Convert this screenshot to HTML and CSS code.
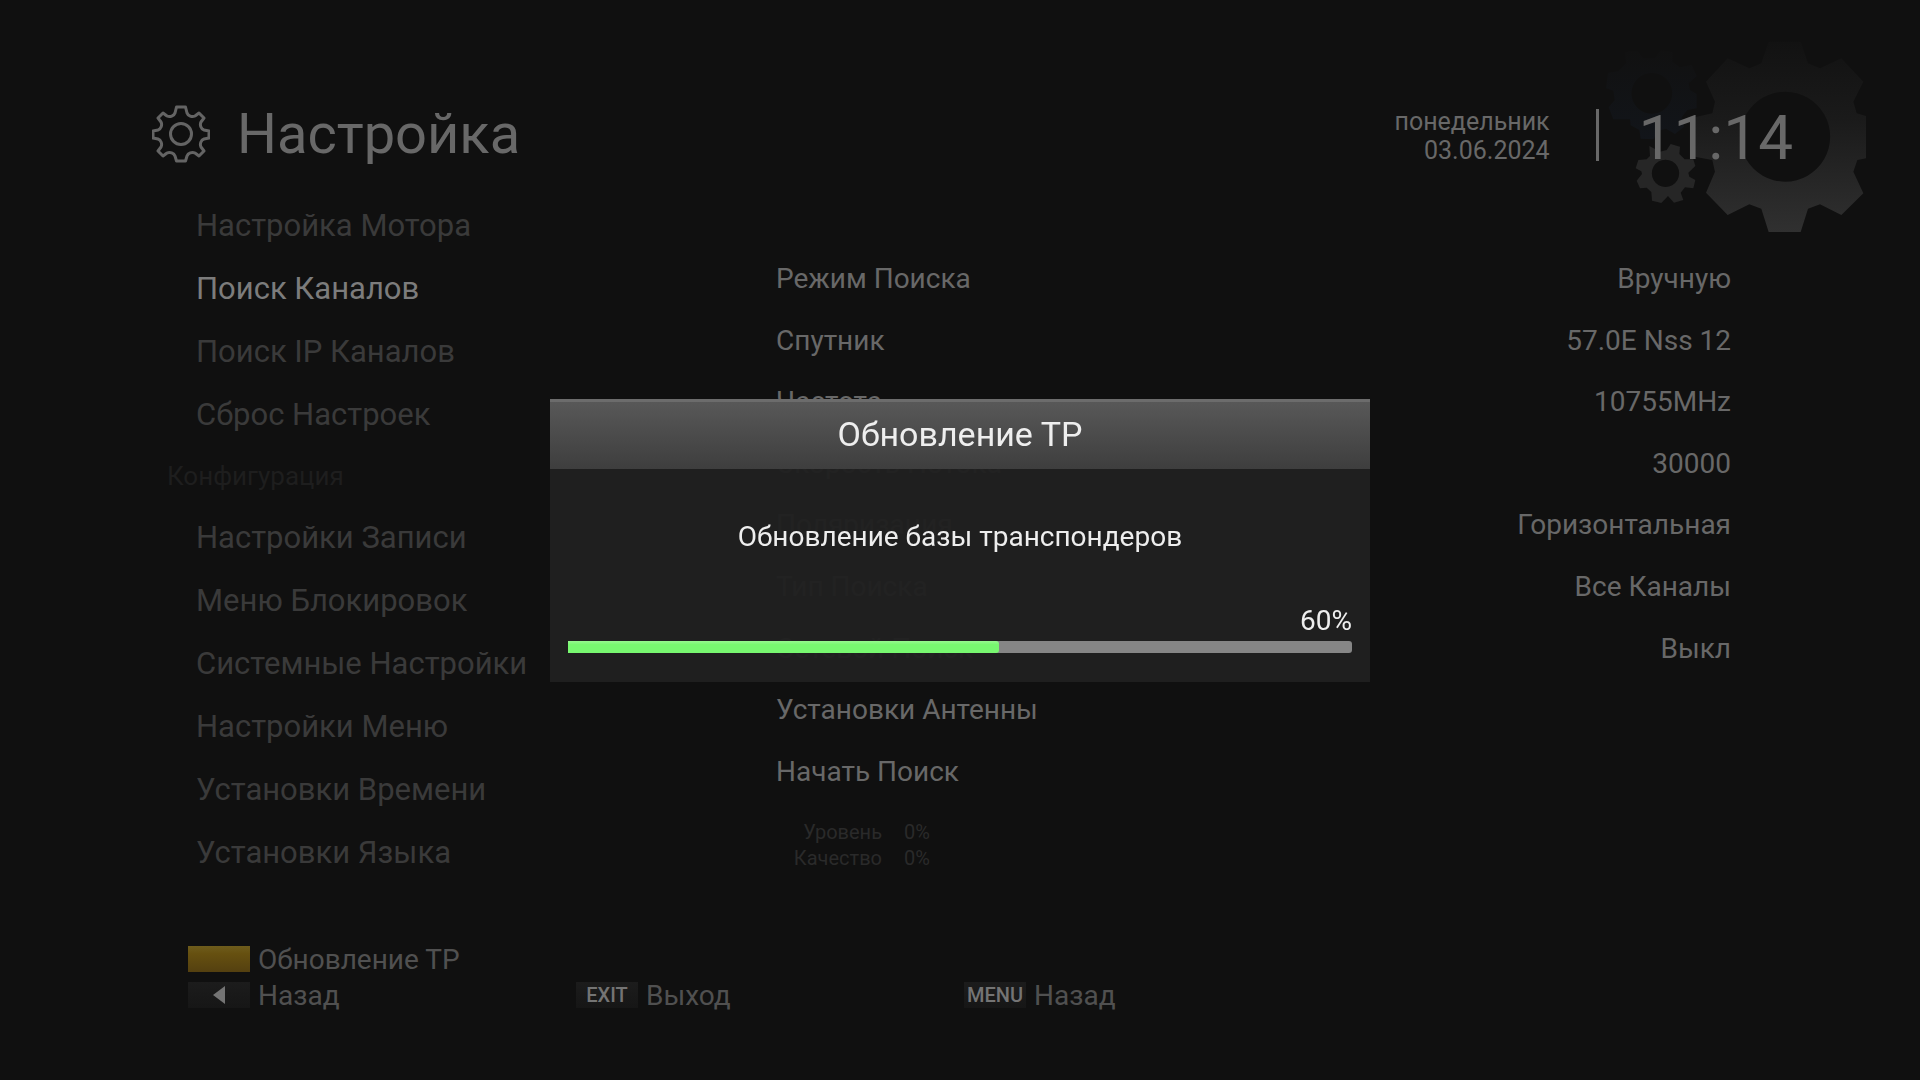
FILE: index.html
```html
<!DOCTYPE html>
<html lang="ru">
<head>
  <meta charset="UTF-8">
  <title>Настройка</title>
  <link rel="stylesheet" href="styles.css">
</head>
<body>

  <svg class="gears" viewBox="0 0 840 660" aria-hidden="true">
    <defs>
      <linearGradient id="bigFill" x1="0" y1="0" x2="0" y2="1">
        <stop offset="0" stop-color="#121212"/>
        <stop offset="0.4" stop-color="#1a1a1a"/>
        <stop offset="1" stop-color="#303030"/>
      </linearGradient>
      <linearGradient id="blueFill" x1="0" y1="0" x2="0" y2="1">
        <stop offset="0" stop-color="#111111"/>
        <stop offset="1" stop-color="#12151a"/>
      </linearGradient>
    </defs>
    <path fill="url(#blueFill)" fill-rule="evenodd" d="M75 65L112 62L130 85H165L182 60L218 66L217 95L240 112L275 104L290 138L266 160L270 180L290 192V235L262 240L245 262L252 290L225 312L198 296L175 302L160 328L122 326L118 300L92 286L90 268L40 268L26 232L44 210L40 182L18 175L24 128L54 124L78 100ZM155 129a61 61 0 1 0 1 0z"/>
    <path fill="#262626" fill-rule="evenodd" d="M148 348L180 365L200 360L212 342L240 350L238 372L254 388L280 388L286 408L265 428L268 440L286 450L280 475L255 472L242 488L250 510L222 518L204 498L184 519L156 512L154 486L140 473L120 475L110 452L126 432L124 424L107 415L115 390L140 388L150 378ZM196 389a41 41 0 1 0 1 0z"/>
    <path fill="url(#bigFill)" fill-rule="evenodd" d="M506 35H602L624 100L660 115L724 85L790 155L760 215L770 250L798 258V385L772 390L760 425L790 490L724 555L660 523L624 536L602 606H506L484 536L448 523L383 555L318 488L345 425L337 390L284 380V262L337 250L345 215L318 155L383 85L448 115L484 100ZM555 185a135 135 0 1 0 1 0z"/>
  </svg>

  <div class="screen">
    <header class="header">
      <svg class="header-icon" viewBox="0 0 58 58" aria-hidden="true">
        <path d="M24.500 2h9l1.500 6c1 3 5 4.500 8 3l4-3 5 5-3 4c-1.500 3 0 7 3 8l5 1v7l-5 1c-3 1-4.500 5-3 8l3 4-5 5-4-3c-3-1.500-7 0-8 3l-1.500 5h-9L23 51c-1-3-5-4.500-8-3l-4 3-5-5 3-4c1.500-3 0-7-3-8l-5-1v-7l5-1c3-1 4.500-5 3-8l-3-4 5-5 4 3c3 1.500 7 0 8-3z"/>
        <circle cx="29" cy="29" r="10.500"/>
      </svg>
      <h1>Настройка</h1>
      <div class="date">понедельник<br>03.06.2024</div>
      <div class="clock">11:14</div>
    </header>

    <main class="main">
      <nav class="menu">
        <a href="#">Настройка Мотора</a>
        <a href="#" class="active">Поиск Каналов</a>
        <a href="#">Поиск IP Каналов</a>
        <a href="#">Сброс Настроек</a>
        <h2>Конфигурация</h2>
        <a href="#">Настройки Записи</a>
        <a href="#">Меню Блокировок</a>
        <a href="#">Системные Настройки</a>
        <a href="#">Настройки Меню</a>
        <a href="#">Установки Времени</a>
        <a href="#">Установки Языка</a>
      </nav>

      <section class="settings">
        <dl class="options">
          <div><dt>Режим Поиска</dt><dd>Вручную</dd></div>
          <div><dt>Спутник</dt><dd>57.0E Nss 12</dd></div>
          <div><dt>Частота</dt><dd>10755MHz</dd></div>
          <div><dt>Скорость Потока</dt><dd>30000</dd></div>
          <div><dt>Поляризация</dt><dd>Горизонтальная</dd></div>
          <div><dt>Тип Поиска</dt><dd>Все Каналы</dd></div>
          <div><dt>Сетевой Поиск</dt><dd>Выкл</dd></div>
          <div><dt>Установки Антенны</dt></div>
          <div><dt>Начать Поиск</dt></div>
        </dl>
        <dl class="signal">
          <dt>Уровень</dt><dd>0%</dd>
          <dt>Качество</dt><dd>0%</dd>
        </dl>
      </section>
    </main>

    <footer class="keys">
      <button class="key key-wide"><span class="cap cap-yellow"></span>Обновление ТР</button>
      <button class="key"><span class="cap"><svg class="arrow" viewBox="0 0 12 18"><path d="M12 0v18L0 9z"/></svg></span>Назад</button>
      <button class="key"><span class="cap">EXIT</span>Выход</button>
      <button class="key"><span class="cap">MENU</span>Назад</button>
    </footer>
  </div>

  <div class="overlay">
    <div class="dialog" role="dialog" aria-labelledby="dialogTitle">
      <h2 class="dialog-title" id="dialogTitle">Обновление ТР</h2>
      <div class="dialog-body">
        <p>Обновление базы транспондеров</p>
        <label for="progress">60%</label>
        <progress id="progress" max="100" value="55"></progress>
      </div>
    </div>
  </div>

</body>
</html>
```

FILE: styles.css
```css
* {
  box-sizing: border-box;
  margin: 0;
  padding: 0;
}
body {
  font-family: Roboto, "Noto Sans", sans-serif;
  background: #101010;
  color: #686868;
  min-height: 100vh;
}
a {
  color: inherit;
  text-decoration: none;
}
.gears {
  position: absolute;
  top: 30px;
  right: 40px;
  width: 280px;
}
.screen {
  position: relative;
  padding: 94px 127px 0 152px;
}

/* header */
.header {
  display: flex;
  align-items: center;
  height: 80px;
}
.header-icon {
  width: 58px;
  margin-right: 27px;
  fill: none;
  stroke: #646464;
  stroke-width: 3;
  stroke-linejoin: round;
}
.header h1 {
  font-size: 56px;
  font-weight: 400;
}
.date {
  margin-top: 4px;
  margin-left: auto;
  padding-right: 46px;
  font-size: 25px;
  line-height: 29px;
  text-align: right;
}
.clock {
  margin-top: 2px;
  padding: 6px 0 0 40px;
  border-left: 3px solid #686868;
  font-size: 62px;
  line-height: 46px;
}

/* main */
.main {
  display: grid;
  grid-template-columns: 624px 1fr;
  padding-right: 62px;
}
.menu {
  padding: 20px 0 0 44px;
  font-size: 31px;
  line-height: 63px;
  color: #3a3a3a;
}
.menu a {
  display: block;
}
.menu .active {
  color: #7c7c7c;
}
.menu h2 {
  margin-left: -29px;
  font-size: 26px;
  font-weight: 400;
  line-height: 60px;
  color: #1e1e1e;
}
.options {
  display: grid;
  grid-auto-rows: 1fr;
  height: 554px;
  margin-top: 74px;
  font-size: 28px;
}
.options div {
  display: flex;
  justify-content: space-between;
  align-items: center;
}
.signal {
  display: grid;
  grid-template-columns: 106px 1fr;
  column-gap: 22px;
  padding-top: 17px;
  font-size: 20px;
  line-height: 26px;
  color: #2a2a2a;
}
.signal dt {
  text-align: right;
}

/* remote keys */
.keys {
  display: grid;
  grid-template-columns: 388px 388px 388px;
  padding: 57px 0 0 36px;
}
.key {
  display: flex;
  align-items: center;
  height: 36px;
  border: 0;
  background: none;
  font: inherit;
  font-size: 28px;
  color: #505050;
}
.key-wide {
  grid-column: 1 / -1;
}
.cap {
  display: flex;
  align-items: center;
  justify-content: center;
  width: 62px;
  height: 26px;
  margin-right: 8px;
  background: linear-gradient(#1c1c1c, #161616);
  font-size: 20px;
  font-weight: 500;
  color: #747474;
}
.cap-yellow {
  background: linear-gradient(#6e5c1c, #665010 30%, #544010);
}
.arrow {
  width: 12px;
  fill: #747474;
}

/* dialog */
.overlay {
  position: fixed;
  inset: 0;
  display: flex;
  align-items: center;
  justify-content: center;
}
.dialog {
  width: 820px;
  color: #eee;
}
.dialog-title {
  height: 70px;
  border-top: 3px solid #6c6c6c;
  background: linear-gradient(#585858, #3e3e3e);
  font-size: 34px;
  font-weight: 400;
  line-height: 64px;
  text-align: center;
}
.dialog-body {
  display: flex;
  flex-direction: column;
  padding: 50px 18px 29px;
  background: rgba(32, 32, 32, 0.97);
  font-size: 28px;
  line-height: 36px;
}
.dialog-body p {
  margin-bottom: 48px;
  text-align: center;
}
.dialog-body label {
  text-align: right;
}
progress {
  appearance: none;
  width: 100%;
  height: 12px;
  margin-top: 2px;
}
progress::-webkit-progress-bar {
  border-radius: 0 3px 3px 0;
  background: #868686;
}
progress::-webkit-progress-value {
  border-radius: 0 3px 3px 0;
  background: linear-gradient(#98f890, #78f870 30%);
}
```
